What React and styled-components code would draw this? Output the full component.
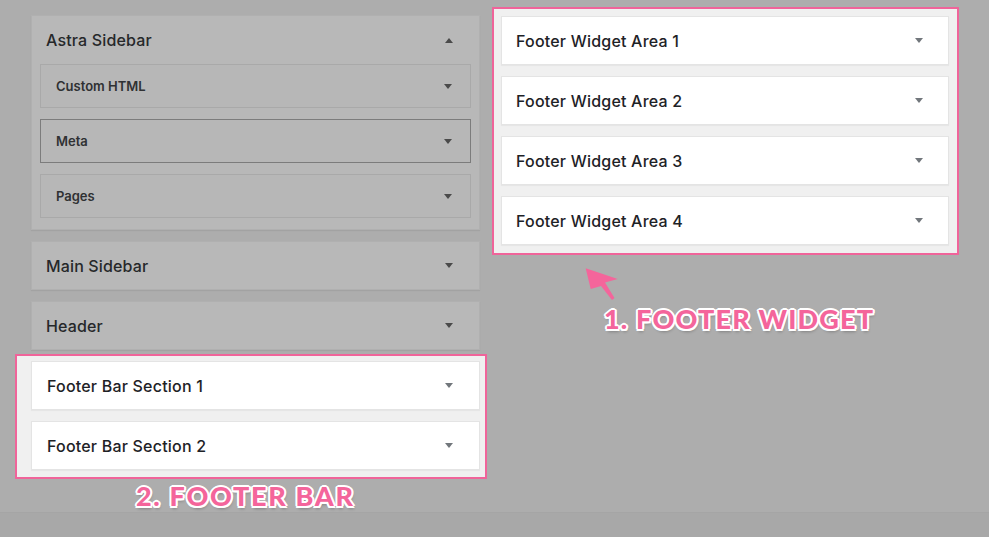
import styled, { createGlobalStyle } from 'styled-components'

const GlobalStyle = createGlobalStyle`
    html, body {
        margin: 0;
        padding: 0;
        background: #adadad;
    }
    * {
        box-sizing: border-box;
    }
`

const Page = styled.div`
    width: 989px;
    height: 537px;
    display: flex;
    flex-direction: column;
    background: #adadad;
    font-family: Inter, "Noto Sans", sans-serif;
    overflow: hidden;
`
const Main = styled.div`
    flex: 1;
    display: flex;
    align-items: flex-start;
    padding-left: 15px;
`
const BottomStrip = styled.div`
    height: 25px;
    background: #a8a8a8;
    border-top: 1px solid #a5a5a5;
`
const LeftColumn = styled.div`
    width: 472px;
    padding-top: 15px;
    display: flex;
    flex-direction: column;
`
const RightColumn = styled.div`
    width: 467px;
    margin-left: 5px;
    padding-top: 7px;
    display: flex;
    flex-direction: column;
`
const Panel = styled.div`
    width: 449px;
    margin: 0 7px 11px 16px;
    background: #b8b8b8;
    border: 1px solid #b0b0b0;
    box-shadow: 0 1px 1px rgba(0, 0, 0, 0.06);
`
const PanelHead = styled.div`
    height: ${props => props.tall ? '48px' : '47px'};
    display: flex;
    align-items: center;
    justify-content: space-between;
    padding: 0 26px 0 14px;
    font-size: 16px;
    font-weight: 500;
    letter-spacing: 0.15px;
    color: #26282a;
`
const SubList = styled.div`
    display: flex;
    flex-direction: column;
    gap: 11px;
    padding: 0 8px 11px;
`
const SubBox = styled.div`
    height: 44px;
    display: flex;
    align-items: center;
    justify-content: space-between;
    padding: 0 18px 0 15px;
    font-size: 13px;
    font-weight: 600;
    color: #2f3133;
    background: #b7b7b7;
    border: 1px solid ${props => props.active ? '#7c7c7c' : '#a9a9a9'};
`
const Group = styled.div`
    border: 2px solid #f0649a;
    background: #f0f0f0;
    display: flex;
    flex-direction: column;
    gap: 11px;
`
const LeftGroup = styled(Group)`
    margin-top: -7px;
    padding: 5px 5px 7px 14px;
`
const RightGroup = styled(Group)`
    padding: 7px 8px 8px 7px;
`
const Item = styled.div`
    width: ${props => props.width}px;
    height: 49px;
    display: flex;
    align-items: center;
    justify-content: space-between;
    padding: 0 ${props => props.right}px 0 ${props => props.left}px;
    background: #fff;
    border: 1px solid #e4e4e4;
    box-shadow: 0 1px 1px rgba(0, 0, 0, 0.04);
    font-size: 16px;
    font-weight: 500;
    letter-spacing: 0.2px;
    color: #1e2226;
`
const Caret = styled.span`
    width: 0;
    height: 0;
    border-left: 4px solid transparent;
    border-right: 4px solid transparent;
    ${props => props.up
        ? `border-bottom: 5px solid ${props.color};`
        : `border-top: 5px solid ${props.color};`}
`
const Label = styled.div`
    font-family: Lato, "Open Sans", sans-serif;
    font-weight: 900;
    font-size: 27px;
    line-height: 30px;
    letter-spacing: ${props => props.spacing}px;
    color: #f4659b;
    margin-left: ${props => props.left}px;
    margin-top: ${props => props.top}px;
    white-space: nowrap;
    text-shadow:
        2px 0 0 #fff, -2px 0 0 #fff, 0 2px 0 #fff, 0 -2px 0 #fff,
        1.5px 1.5px 0 #fff, -1.5px 1.5px 0 #fff, 1.5px -1.5px 0 #fff, -1.5px -1.5px 0 #fff,
        1px 3px 3px rgba(0, 0, 0, 0.25);
`
const PointerWrap = styled.div`
    margin: 8px 0 0 88px;
    height: 37px;
`

const Pointer = () => (
    <PointerWrap>
        <svg width="40" height="37" viewBox="0 0 40 37">
            <polygon
                points="5.7,5.3 10.7,26 21,23 32,37 34.5,35 25,19.5 37.7,16"
                fill="#f4659b"
            />
        </svg>
    </PointerWrap>
)

const subWidgets = [
    { name: 'Custom HTML' },
    { name: 'Meta', active: true },
    { name: 'Pages' },
]

const footerWidgets = ['Footer Widget Area 1', 'Footer Widget Area 2', 'Footer Widget Area 3', 'Footer Widget Area 4']
const footerBars = ['Footer Bar Section 1', 'Footer Bar Section 2']

const App = () => {
    return (
        <Page>
            <GlobalStyle />
            <Main>
                <LeftColumn>
                    <Panel>
                        <PanelHead tall>
                            Astra Sidebar
                            <Caret up color="#4a4a4a" />
                        </PanelHead>
                        <SubList>
                            {subWidgets.map(w => (
                                <SubBox key={w.name} active={w.active}>
                                    {w.name}
                                    <Caret color="#4a4a4a" />
                                </SubBox>
                            ))}
                        </SubList>
                    </Panel>
                    <Panel>
                        <PanelHead>
                            Main Sidebar
                            <Caret color="#4a4a4a" />
                        </PanelHead>
                    </Panel>
                    <Panel>
                        <PanelHead>
                            Header
                            <Caret color="#4a4a4a" />
                        </PanelHead>
                    </Panel>
                    <LeftGroup>
                        {footerBars.map(name => (
                            <Item key={name} width={449} left={15} right={26}>
                                {name}
                                <Caret color="#72777c" />
                            </Item>
                        ))}
                    </LeftGroup>
                    <Label left={121} top={2} spacing={1.7}>2. FOOTER BAR</Label>
                </LeftColumn>
                <RightColumn>
                    <RightGroup>
                        {footerWidgets.map(name => (
                            <Item key={name} width={448} left={14} right={25}>
                                {name}
                                <Caret color="#72777c" />
                            </Item>
                        ))}
                    </RightGroup>
                    <Pointer />
                    <Label left={112} top={4} spacing={1.2}>1. FOOTER WIDGET</Label>
                </RightColumn>
            </Main>
            <BottomStrip />
        </Page>
    )
}

export default App
